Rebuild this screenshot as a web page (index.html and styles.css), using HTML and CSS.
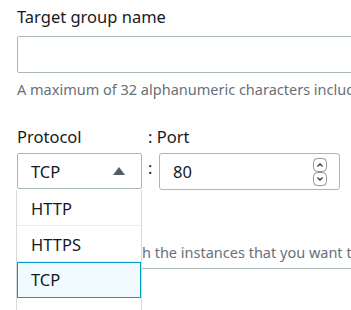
FILE: index.html
```html
<!DOCTYPE html>
<html lang="en">
<head>
    <meta charset="UTF-8">
    <meta name="viewport" content="width=device-width, initial-scale=1.0">
    <title>Target group</title>
    <link rel="stylesheet" href="styles.css">
</head>
<body>
    <div class="container">
        <form>
            <div class="field">
                <label for="name">Target group name</label>
                <input type="text" id="name" class="text-input name-input">
                <p class="hint">A maximum of 32 alphanumeric characters including hyphens are allowed, but the name must not begin or end with a hyphen.</p>
            </div>

            <div class="row">
                <div class="col protocol">
                    <label>Protocol</label>
                    <div class="select">
                        <span>TCP</span>
                        <svg class="caret" width="12" height="8" viewBox="0 0 12 8"><path d="M6 0 L12 8 L0 8 Z" fill="#545b64"/></svg>
                    </div>
                    <ul class="options">
                        <li>HTTP</li>
                        <li>HTTPS</li>
                        <li class="active">TCP</li>
                        <li>TLS</li>
                    </ul>
                </div>
                <div class="sep">:</div>
                <div class="col port">
                    <label>: Port</label>
                    <div class="text-input port-input">
                        <span>80</span>
                        <svg class="spin" width="14" height="28" viewBox="0 0 14 28">
                            <rect x="0.5" y="0.5" width="13" height="13" rx="4" fill="#fff" stroke="#8a9299"/>
                            <rect x="0.5" y="14.5" width="13" height="13" rx="4" fill="#fff" stroke="#8a9299"/>
                            <path d="M4.5 8.5 L7 6 L9.5 8.5" fill="none" stroke="#333" stroke-width="1.3"/>
                            <path d="M4.5 19.5 L7 22 L9.5 19.5" fill="none" stroke="#333" stroke-width="1.3"/>
                        </svg>
                    </div>
                </div>
            </div>

            <div class="field vpc">
                <label>VPC</label>
                <p class="hint">Select the VPC with the instances that you want to include in the target group.</p>
            </div>
        </form>
    </div>
</body>
</html>
```

FILE: styles.css
```css
*{
    box-sizing: border-box;
    margin: 0;
    padding: 0;
}

html, body{
    height: 100%;
    overflow: hidden;
    background: #fff;
}

body{
    font-family: 'Noto Sans', sans-serif;
    color: #16191f;
}

.container form{
    width: 420px;
    padding: 4px 0 0 17px;
}

label{
    display: block;
    font-size: 16.5px;
    line-height: 26px;
}

.text-input{
    display: block;
    height: 37px;
    border: 1px solid #aab7b8;
    border-radius: 2px;
    background: #fff;
}

.name-input{
    width: 100%;
    margin-top: 6px;
}

.hint{
    font-size: 14.5px;
    line-height: 22px;
    color: #687078;
    white-space: nowrap;
    margin-top: 5px;
}

.row{
    display: flex;
    margin-top: 24px;
}

.col{
    position: relative;
}

.col label{
    margin-bottom: 3px;
}

.protocol{
    width: 125px;
}

.select{
    height: 36px;
    border: 1px solid #aab7b8;
    border-radius: 2px;
    display: flex;
    align-items: center;
    justify-content: space-between;
    padding: 0 16px 0 13px;
    font-size: 16.5px;
}

.sep{
    width: 17px;
    padding: 33px 0 0 6px;
    font-size: 16px;
}

.port{
    width: 181px;
}

.port label{
    margin-left: -11px;
}

.port-input{
    display: flex;
    align-items: center;
    justify-content: space-between;
    padding: 0 12px 0 13px;
    font-size: 16.5px;
    border-radius: 3px;
}

.options{
    list-style: none;
    position: absolute;
    left: -1px;
    top: 66px;
    width: 126px;
    background: #fff;
    border-left: 1px solid #d5dbdb;
    border-right: 1px solid #d5dbdb;
    z-index: 2;
}

.options li{
    height: 36px;
    line-height: 38px;
    padding-left: 14px;
    font-size: 16.5px;
    border-bottom: 1px solid #eaeded;
}

.options li.active{
    background: #f1faff;
    border: 1px solid #00a1c9;
    padding-left: 13px;
    line-height: 34px;
}

.vpc{
    margin-top: 21px;
    border-bottom: 1px solid #aab7b8;
    padding-bottom: 5px;
}

.vpc .hint{
    margin-top: 4px;
    text-indent: 4px;
}
```
